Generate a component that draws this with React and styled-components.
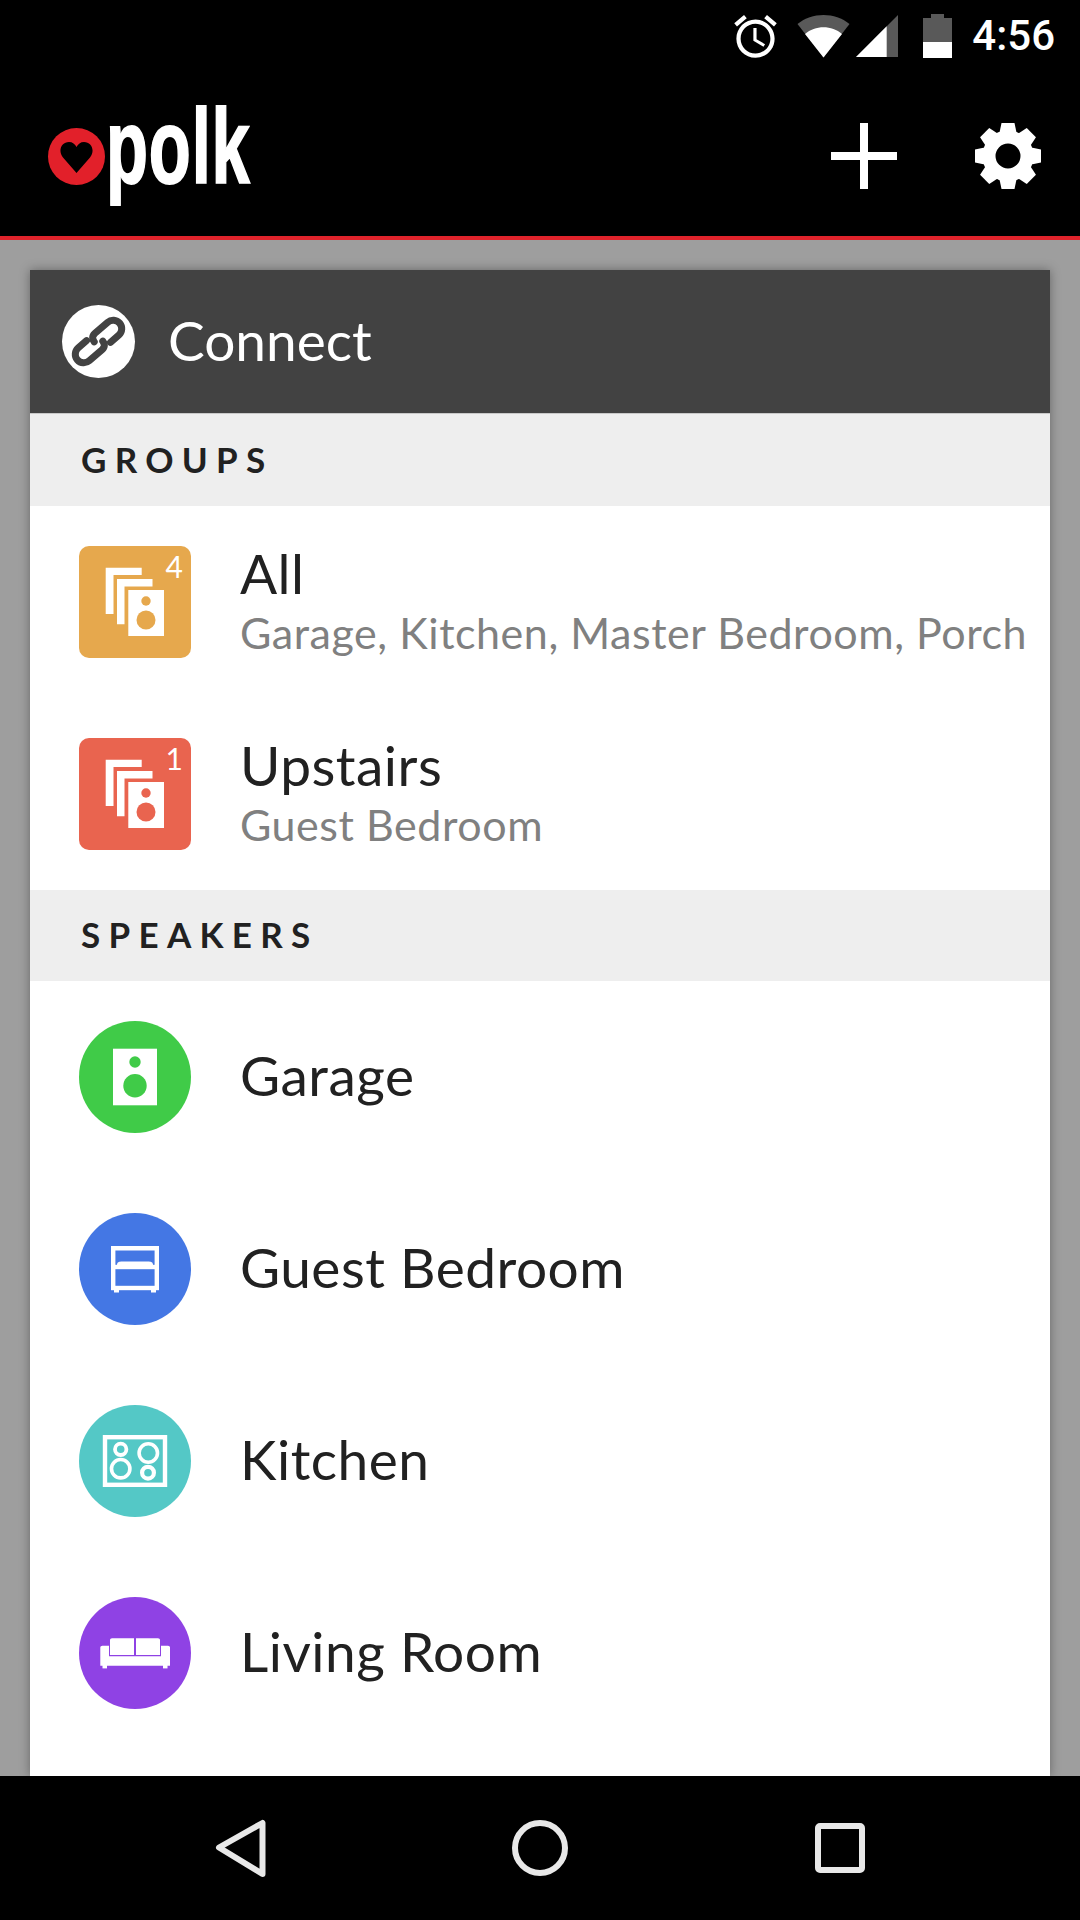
import styled, { createGlobalStyle } from "styled-components";

const Global = createGlobalStyle`
  html, body { margin: 0; padding: 0; background: #000; }
  * { box-sizing: border-box; }
`;

const Page = styled.div`
  width: 1080px;
  height: 1920px;
  display: flex;
  flex-direction: column;
  overflow: hidden;
  background: #9e9e9e;
  font-family: Lato, "Open Sans", sans-serif;
`;

const StatusBar = styled.div`
  height: 72px;
  flex: none;
  background: #000;
  display: flex;
  align-items: center;
  justify-content: flex-end;
  padding-right: 25px;
  color: #fff;
`;

const StatusIcon = styled.svg`
  display: block;
  flex: none;
  margin-left: ${(p) => p.$gap || 0}px;
`;

const Clock = styled.span`
  margin-left: 20px;
  font-family: Roboto, sans-serif;
  font-size: 42px;
  font-weight: 500;
  line-height: 1;
`;

const AppBar = styled.header`
  height: 168px;
  flex: none;
  background: #000;
  border-bottom: 4px solid #e0232b;
  display: flex;
  align-items: center;
  justify-content: space-between;
  padding: 4px 39px 0 48px;
`;

const Logo = styled.div`
  display: flex;
  align-items: center;
`;

const LogoBadge = styled.div`
  width: 57px;
  height: 57px;
  border-radius: 50%;
  background: #e2202a;
  display: flex;
  align-items: center;
  justify-content: center;
  flex: none;
`;

const LogoWord = styled.span`
  display: block;
  margin-left: 1px;
  color: #fff;
  font-family: "Liberation Sans", sans-serif;
  font-size: 86px;
  font-weight: 700;
  line-height: 1;
  letter-spacing: 1px;
  -webkit-text-stroke: 1.5px #fff;
  transform: translateY(-10px) scale(0.8, 1.23);
  transform-origin: left center;
`;

const Actions = styled.div`
  display: flex;
  align-items: center;
  gap: 78px;
`;

const Main = styled.main`
  flex: 1;
  min-height: 0;
  padding: 30px 30px 0;
`;

const Card = styled.section`
  height: 100%;
  background: #fff;
  overflow: hidden;
  box-shadow: 0 0 10px rgba(0, 0, 0, 0.35);
`;

const CardHeader = styled.div`
  height: 144px;
  background: #424242;
  border-bottom: 1px solid #c8c8c8;
  display: flex;
  align-items: center;
  padding-left: 32px;
`;

const LinkBadge = styled.div`
  width: 73px;
  height: 73px;
  border-radius: 50%;
  background: #fff;
  flex: none;
`;

const CardTitle = styled.h1`
  margin: 0 0 4px 33px;
  color: #fff;
  font-size: 55px;
  font-weight: 400;
`;

const SectionLabel = styled.div`
  height: ${(p) => p.$h}px;
  background: #eeeeee;
  display: flex;
  align-items: center;
  padding: 0 0 ${(p) => p.$pb || 0}px 51px;
  color: #212121;
  font-size: 35px;
  font-weight: 700;
  letter-spacing: 8.3px;
`;

const Row = styled.div`
  height: 192px;
  display: flex;
  align-items: center;
  padding-left: 49px;
`;

const Tile = styled.div`
  position: relative;
  width: 112px;
  height: 112px;
  flex: none;
  background: ${(p) => p.$color};
  border-radius: ${(p) => (p.$round ? "50%" : "10px")};
`;

const TileCount = styled.span`
  position: absolute;
  top: 3px;
  right: 8px;
  color: #fff;
  font-size: 30px;
  line-height: 34px;
`;

const RowText = styled.div`
  margin: 0 0 4px 49px;
  display: flex;
  flex-direction: column;
`;

const RowTitle = styled.div`
  color: #212121;
  font-size: 55px;
  line-height: 62px;
  letter-spacing: 0.5px;
`;

const RowSub = styled.div`
  margin-top: 4px;
  color: #808080;
  font-size: 43px;
  line-height: 50px;
  letter-spacing: 0.55px;
  white-space: nowrap;
`;

const NavBar = styled.nav`
  height: 144px;
  flex: none;
  background: #000;
  display: grid;
  grid-template-columns: repeat(3, 300px);
  justify-items: center;
  align-items: center;
  padding: 0 90px;
`;

const Glyph = styled.svg`
  display: block;
  width: 112px;
  height: 112px;
`;

function AlarmIcon() {
  return (
    <StatusIcon width="51" height="51" viewBox="0 0 24 24" fill="#fff">
      <path d="M22 5.72l-4.6-3.86-1.29 1.53 4.6 3.86L22 5.72zM7.88 3.39L6.6 1.86 2 5.71l1.29 1.53 4.59-3.85zM12.5 8H11v6l4.75 2.85.75-1.23-4-2.37V8zM12 4c-4.97 0-9 4.03-9 9s4.03 9 9 9 9-4.03 9-9-4.03-9-9-9zm0 16c-3.87 0-7-3.13-7-7s3.13-7 7-7 7 3.13 7 7-3.13 7-7 7z" />
    </StatusIcon>
  );
}

function WifiIcon() {
  return (
    <StatusIcon $gap={16} width="53" height="43" viewBox="0 0 53 43">
      <path d="M0.5 9C15-3 38-3 52.5 9L26.5 42.5Z" fill="#595959" />
      <path d="M8 19C18 10 35 10 45 19L26.5 42.5Z" fill="#fff" />
    </StatusIcon>
  );
}

function SignalIcon() {
  return (
    <StatusIcon $gap={6} width="42" height="42" viewBox="0 0 42 42">
      <path d="M42 0V42H0Z" fill="#595959" />
      <path d="M30.7 11.3V42H0Z" fill="#fff" />
    </StatusIcon>
  );
}

function BatteryIcon() {
  return (
    <StatusIcon $gap={25} width="29" height="44" viewBox="0 0 29 44">
      <path d="M8 0H21V4H29V44H0V4H8Z" fill="#595959" />
      <rect x="0" y="28" width="29" height="16" fill="#fff" />
    </StatusIcon>
  );
}

function PlusIcon() {
  return (
    <svg width="66" height="66" viewBox="0 0 66 66" fill="#fff" style={{ display: "block" }}>
      <rect x="0" y="29" width="66" height="8" />
      <rect x="29" y="0" width="8" height="66" />
    </svg>
  );
}

function GearIcon() {
  const teeth = [0, 45, 90, 135, 180, 225, 270, 315];
  return (
    <svg width="66" height="66" viewBox="0 0 66 66" style={{ display: "block" }}>
      {teeth.map((a) => (
        <path key={a} d="M26.5 0H39.5L42 12H24Z" fill="#fff" transform={`rotate(${a} 33 33)`} />
      ))}
      <circle cx="33" cy="33" r="19" fill="none" stroke="#fff" strokeWidth="13" />
    </svg>
  );
}

function HeartIcon() {
  return (
    <svg width="33" height="31" viewBox="0 0 33 31" style={{ display: "block", marginTop: 2 }}>
      <path d="M16.5 31L3 15.5C-2.5 8.5 1.5 0 9 0C12.5 0 15 2 16.5 5C18 2 20.5 0 24 0C31.5 0 35.5 8.5 30 15.5Z" fill="#000" />
    </svg>
  );
}

function LinkIcon() {
  return (
    <svg width="73" height="73" viewBox="0 0 73 73" style={{ display: "block" }}>
      <g fill="none" stroke="#424242" strokeWidth="7" strokeLinecap="round" transform="rotate(-41 36.5 36.5)">
        <path d="M28 28H17A8.5 8.5 0 0 0 17 45H34C38 45 40 42 40 39" />
        <path d="M45 45H56A8.5 8.5 0 0 0 56 28H39C35 28 33 31 33 34" />
      </g>
    </svg>
  );
}

function GroupGlyph({ color }) {
  return (
    <Glyph viewBox="0 0 112 112">
      <path d="M26.7 21.7H62.7V29H34.5V68H26.7Z" fill="#fff" />
      <path d="M38 33H73.5V40.5H45.5V78.3H38Z" fill="#fff" />
      <rect x="49.3" y="44" width="35.7" height="46" fill="#fff" />
      <circle cx="67" cy="55" r="4.7" fill={color} />
      <circle cx="67" cy="74" r="9.5" fill={color} />
    </Glyph>
  );
}

function SpeakerGlyph({ color }) {
  return (
    <Glyph viewBox="0 0 112 112">
      <rect x="34" y="27.7" width="44" height="56.6" fill="#fff" />
      <circle cx="56" cy="41" r="5.7" fill={color} />
      <circle cx="56" cy="64.7" r="11.7" fill={color} />
    </Glyph>
  );
}

function BedGlyph() {
  return (
    <Glyph viewBox="0 0 112 112">
      <g fill="none" stroke="#fff" strokeWidth="4.4">
        <path d="M34.2 54V35.2H77.8V54" />
        <rect x="34.2" y="54" width="43.6" height="21" />
      </g>
      <path d="M38 52C38 49 40 48.5 43 48.5H69C72 48.5 74 49 74 52Z" fill="#fff" />
      <rect x="35" y="75" width="5" height="4.5" fill="#fff" />
      <rect x="72" y="75" width="5" height="4.5" fill="#fff" />
    </Glyph>
  );
}

function CooktopGlyph() {
  return (
    <Glyph viewBox="0 0 112 112">
      <g fill="none" stroke="#fff">
        <rect x="26" y="32.2" width="60" height="47.6" strokeWidth="4.4" />
        <circle cx="41.7" cy="44.3" r="5.7" strokeWidth="3.8" />
        <circle cx="69.3" cy="48" r="9.2" strokeWidth="3.6" />
        <circle cx="41.7" cy="63.7" r="9.2" strokeWidth="3.6" />
        <circle cx="69" cy="67.7" r="5.9" strokeWidth="4.2" />
      </g>
    </Glyph>
  );
}

function SofaGlyph() {
  return (
    <Glyph viewBox="0 0 112 112">
      <g fill="#fff">
        <path d="M31 43C31 42 32 41.3 33 41.3H55V58H31Z" />
        <path d="M57 41.3H79C80 41.3 81 42 81 43V58H57Z" />
        <path d="M21.3 50.5C21.3 49.5 22.3 48.7 23.3 48.7H30V59.3H82V48.7H89C90 48.7 91 49.5 91 50.5V68.7H21.3Z" />
        <rect x="23.5" y="68" width="4.5" height="3.4" />
        <rect x="84" y="68" width="4.5" height="3.4" />
      </g>
    </Glyph>
  );
}

function NavBack() {
  return (
    <svg width="60" height="60" viewBox="0 0 60 60" style={{ display: "block" }}>
      <path d="M52.5 4.5V55.5L9 29Z" transform="translate(0 0.5)" fill="none" stroke="#e8e8e8" strokeWidth="6" strokeLinejoin="round" />
    </svg>
  );
}

function NavHome() {
  return (
    <svg width="60" height="60" viewBox="0 0 60 60" style={{ display: "block" }}>
      <circle cx="30" cy="30" r="25" fill="none" stroke="#e8e8e8" strokeWidth="6" />
    </svg>
  );
}

function NavRecent() {
  return (
    <svg width="60" height="60" viewBox="0 0 60 60" style={{ display: "block" }}>
      <rect x="8" y="8" width="44" height="44" rx="2" fill="none" stroke="#e8e8e8" strokeWidth="6" />
    </svg>
  );
}

const GROUP_ROWS = [
  { name: "All", members: "Garage, Kitchen, Master Bedroom, Porch", count: 4, color: "#e6a84d" },
  { name: "Upstairs", members: "Guest Bedroom", count: 1, color: "#e9644f" },
];

const SPEAKER_ROWS = [
  { name: "Garage", color: "#40cb48", Icon: SpeakerGlyph },
  { name: "Guest Bedroom", color: "#4477e4", Icon: BedGlyph },
  { name: "Kitchen", color: "#54c8c6", Icon: CooktopGlyph },
  { name: "Living Room", color: "#8f42e4", Icon: SofaGlyph },
];

export default function App() {
  return (
    <Page>
      <Global />
      <StatusBar>
        <AlarmIcon />
        <WifiIcon />
        <SignalIcon />
        <BatteryIcon />
        <Clock>4:56</Clock>
      </StatusBar>
      <AppBar>
        <Logo>
          <LogoBadge>
            <HeartIcon />
          </LogoBadge>
          <LogoWord>polk</LogoWord>
        </Logo>
        <Actions>
          <PlusIcon />
          <GearIcon />
        </Actions>
      </AppBar>
      <Main>
        <Card>
          <CardHeader>
            <LinkBadge>
              <LinkIcon />
            </LinkBadge>
            <CardTitle>Connect</CardTitle>
          </CardHeader>
          <SectionLabel $h={92} $pb={2}>GROUPS</SectionLabel>
          {GROUP_ROWS.map((g) => (
            <Row key={g.name}>
              <Tile $color={g.color}>
                <GroupGlyph color={g.color} />
                <TileCount>{g.count}</TileCount>
              </Tile>
              <RowText>
                <RowTitle>{g.name}</RowTitle>
                <RowSub>{g.members}</RowSub>
              </RowText>
            </Row>
          ))}
          <SectionLabel $h={91} $pb={3}>SPEAKERS</SectionLabel>
          {SPEAKER_ROWS.map((s) => (
            <Row key={s.name}>
              <Tile $color={s.color} $round>
                <s.Icon color={s.color} />
              </Tile>
              <RowText>
                <RowTitle>{s.name}</RowTitle>
              </RowText>
            </Row>
          ))}
        </Card>
      </Main>
      <NavBar>
        <NavBack />
        <NavHome />
        <NavRecent />
      </NavBar>
    </Page>
  );
}
